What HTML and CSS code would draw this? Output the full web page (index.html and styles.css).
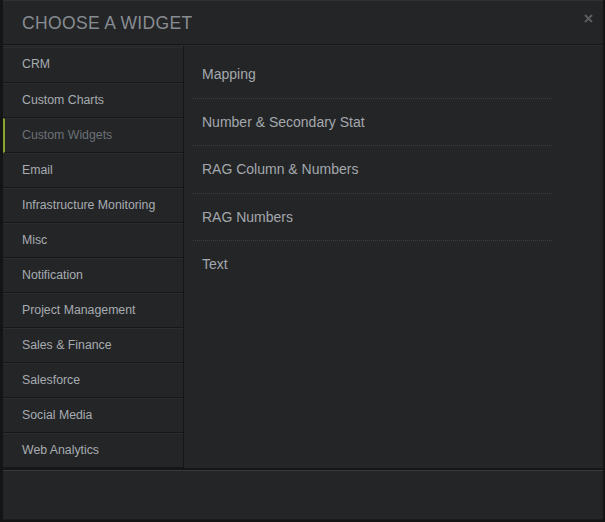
FILE: index.html
```html
<!DOCTYPE html>
<html lang="en">

<head>
    <meta charset="UTF-8">
    <meta name="viewport" content="width=device-width, initial-scale=1.0">
    <title>Choose a Widget</title>
    <link rel="stylesheet" href="styles.css">
</head>

<body>
    <div class="modal">
        <div class="modal-header">
            <h1>CHOOSE A WIDGET</h1>
            <span class="close">
                <svg width="9" height="9" viewBox="0 0 9 9">
                    <path d="M1 1 L8 8 M8 1 L1 8" stroke="#5a5c5f" stroke-width="2" />
                </svg>
            </span>
        </div>

        <div class="modal-body">
            <!-- Categories -->
            <ul class="categories">
                <li>CRM</li>
                <li>Custom Charts</li>
                <li class="active">Custom Widgets</li>
                <li>Email</li>
                <li>Infrastructure Monitoring</li>
                <li>Misc</li>
                <li>Notification</li>
                <li>Project Management</li>
                <li>Sales &amp; Finance</li>
                <li>Salesforce</li>
                <li>Social Media</li>
                <li>Web Analytics</li>
            </ul>

            <!-- Widgets -->
            <ul class="widgets">
                <li>Mapping</li>
                <li>Number &amp; Secondary Stat</li>
                <li>RAG Column &amp; Numbers</li>
                <li>RAG Numbers</li>
                <li>Text</li>
            </ul>
        </div>

        <div class="modal-footer"></div>
    </div>
</body>

</html>
```

FILE: styles.css
```css
body {
    font-family: "Liberation Sans", Arial, sans-serif;
    margin: 0;
    background-color: #141414;
    height: 522px;
    overflow: hidden;
}

.modal {
    margin-left: 3px;
    width: 600px;
    height: 520px;
    background-color: #242527;
    border-top: 1px solid #303133;
    box-sizing: border-box;
    display: flex;
    flex-direction: column;
}

.modal-header {
    height: 43px;
    display: flex;
    align-items: center;
    justify-content: space-between;
    padding: 0 10px 0 19px;
    border-bottom: 1px solid #151617;
}

.modal-header h1 {
    margin: 0;
    font-size: 17.5px;
    font-weight: normal;
    color: #878c92;
    letter-spacing: 0.35px;
    padding-top: 2px;
}

.close {
    display: flex;
    margin-top: -8px;
}

.modal-body {
    display: flex;
    height: 422px;
    border-top: 1px solid #2b2c2e;
}

ul {
    list-style: none;
    margin: 0;
    padding: 0;
}

.categories {
    width: 181px;
    padding-top: 1px;
    border-right: 1px solid #151617;
    box-sizing: border-box;
}

.categories li {
    height: 33px;
    line-height: 33px;
    padding-left: 19px;
    font-size: 12.3px;
    color: #a7acb1;
    border-top: 1px solid #2c2d2f;
    border-bottom: 1px solid #161718;
}

.categories li:first-child {
    height: 34px;
}

.categories .active {
    color: #6c7076;
    border-left: 2px solid #8ba530;
    padding-left: 17px;
}

.widgets {
    flex: 1;
    padding: 5px 0 0 9px;
}

.widgets li {
    width: 350px;
    height: 46.5px;
    line-height: 46px;
    padding-left: 9px;
    font-size: 14px;
    color: #a3a8ad;
    border-bottom: 1px dotted #3d3e41;
}

.widgets li:last-child {
    border-bottom: none;
}

.modal-footer {
    flex: 1;
    border-top: 2px solid #151617;
    box-shadow: inset 0 1px 0 #38393b;
    border-bottom: 1px solid #1a1b1c;
}
```
